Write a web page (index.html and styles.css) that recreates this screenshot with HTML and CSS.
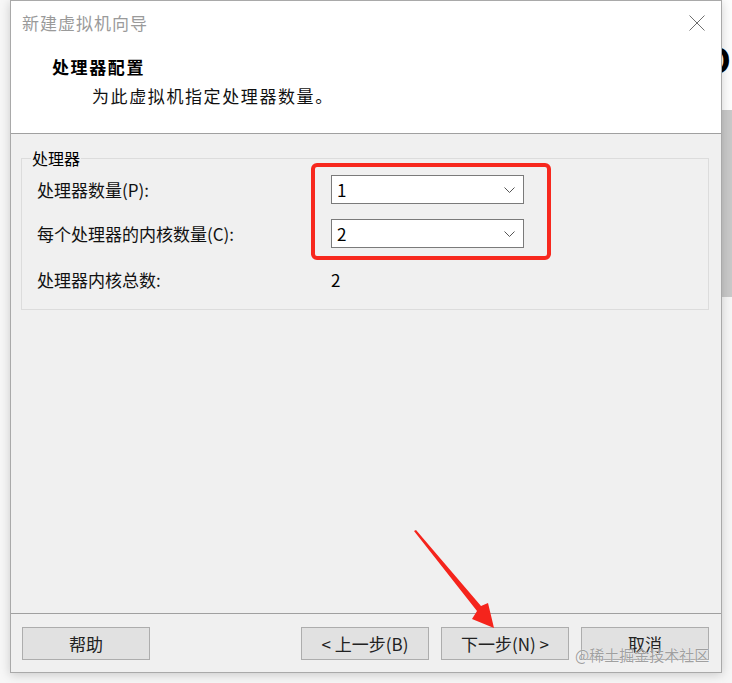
FILE: index.html
```html
<!DOCTYPE html>
<html lang="zh-CN">
<head>
<meta charset="utf-8">
<title>新建虚拟机向导</title>
<link rel="stylesheet" href="styles.css">
</head>
<body>
<div class="screen">
  <div class="dialog">
    <div class="header">
      <div class="titlebar">
        <span class="title">新建虚拟机向导</span>
        <svg class="close" width="16" height="16" viewBox="0 0 16 16"><path d="M0.5 0.5 L15.5 15.5 M15.5 0.5 L0.5 15.5" stroke="#6e6e6e" stroke-width="1" fill="none"/></svg>
      </div>
      <div class="heading">处理器配置</div>
      <div class="subheading">为此虚拟机指定处理器数量。</div>
    </div>
    <div class="main">
      <fieldset class="group">
        <legend>处理器</legend>
        <div class="row">
          <span class="label">处理器数量(P):</span>
          <div class="select"><span>1</span><svg width="11" height="6" viewBox="0 0 11 6"><path d="M0.5 0.5 L5.5 5.5 L10.5 0.5" stroke="#555" stroke-width="1" fill="none"/></svg></div>
        </div>
        <div class="row">
          <span class="label">每个处理器的内核数量(C):</span>
          <div class="select"><span>2</span><svg width="11" height="6" viewBox="0 0 11 6"><path d="M0.5 0.5 L5.5 5.5 L10.5 0.5" stroke="#555" stroke-width="1" fill="none"/></svg></div>
        </div>
        <div class="row row-total">
          <span class="label">处理器内核总数:</span>
          <span class="value">2</span>
        </div>
      </fieldset>
    </div>
    <div class="footer">
      <button class="btn">帮助</button>
      <div class="spacer"></div>
      <div class="nav">
        <button class="btn">&lt; 上一步(B)</button>
        <button class="btn">下一步(N) &gt;</button>
        <button class="btn">取消</button>
      </div>
    </div>
  </div>
  <div class="bgwin">
    <div class="bg-top"><span class="bg-letter">O</span></div>
    <div class="bg-bar"></div>
    <div class="bg-rest"></div>
  </div>
</div>
<div class="highlight"></div>
<svg class="arrow" width="732" height="683" viewBox="0 0 732 683">
  <polygon points="414,531 416,530 481,606 488,603 494,628 472,619 477,611" fill="#f5241c"/>
</svg>
<div class="watermark">@稀土掘金技术社区</div>
</body>
</html>
```
FILE: styles.css
```css
* { box-sizing: border-box; }
html, body { margin: 0; padding: 0; }
body {
  width: 732px;
  height: 683px;
  overflow: hidden;
  background: #f7f7f7;
  font-family: "Noto Sans CJK SC", "Noto Sans", sans-serif;
  color: #000;
  position: relative;
}
.screen {
  display: flex;
  height: 683px;
}
.dialog {
  margin-left: 10px;
  width: 712px;
  height: 673px;
  border: 1px solid #a9a9a9;
  background: #f0f0f0;
  display: flex;
  flex-direction: column;
  box-shadow: 0 2px 10px rgba(0,0,0,0.18);
  position: relative;
  z-index: 1;
}
.header {
  background: #fff;
  height: 133px;
  border-bottom: 1px solid #a0a0a0;
  display: flex;
  flex-direction: column;
}
.titlebar {
  height: 44px;
  display: flex;
  align-items: center;
  justify-content: space-between;
  padding: 0 16px 0 11px;
}
.title {
  font-size: 17px;
  color: #9a9a9a;
  letter-spacing: 1px;
  line-height: 24px;
}
.close { display: block; }
.heading {
  margin-top: 10px;
  margin-left: 41px;
  font-size: 17px;
  line-height: 24px;
  font-weight: 700;
  letter-spacing: 1.6px;
  color: #000;
}
.subheading {
  margin-top: 5px;
  margin-left: 81px;
  font-size: 17px;
  line-height: 24px;
  letter-spacing: 1.6px;
  color: #111;
}
.main {
  flex: 1;
  padding: 14px 12px 0 10px;
}
.group {
  margin: 0;
  border: 1px solid #dcdcdc;
  padding: 7px 0 17px 0;
  min-width: 0;
}
.group legend {
  margin-left: 9px;
  padding: 0 1px;
  font-size: 16px;
  line-height: 20px;
}
.row {
  display: flex;
  align-items: center;
  height: 29px;
  padding-left: 15px;
}
.row + .row { margin-top: 15px; }
.row-total { height: 24px; margin-top: 20px !important; }
.label {
  width: 294px;
  font-size: 17px;
  line-height: 24px;
  color: #111;
}
.select {
  width: 193px;
  height: 29px;
  border: 1px solid #7a7a7a;
  background: #fff;
  display: flex;
  align-items: center;
  justify-content: space-between;
  padding: 0 8px 0 5px;
  font-size: 17px;
}
.select svg { display: block; }
.value { font-size: 17px; line-height: 24px; }
.footer {
  height: 59px;
  border-top: 1px solid #a0a0a0;
  padding: 13px 12px 0 11px;
  display: flex;
  align-items: flex-start;
}
.spacer { flex: 1; }
.nav { display: flex; gap: 12px; }
.btn {
  width: 128px;
  height: 33px;
  padding: 0;
  background: #e1e1e1;
  border: 1px solid #adadad;
  font-family: "Noto Sans CJK SC", "Noto Sans", sans-serif;
  font-size: 17px;
  color: #222;
  line-height: 24px;
}
.bgwin {
  flex: 1;
  display: flex;
  flex-direction: column;
  overflow: hidden;
}
.bg-top {
  height: 110px;
  background: #fdfdfd;
  overflow: hidden;
}
.bg-letter {
  display: block;
  margin-top: 42px;
  margin-left: -21px;
  font-family: "Liberation Sans", sans-serif;
  font-weight: 700;
  font-size: 38px;
  line-height: 38px;
  color: #000;
}
.bg-bar {
  height: 187px;
  background: #c9c9c9;
}
.bg-rest {
  flex: 1;
  background: #f6f6f6;
}
.highlight {
  position: absolute;
  left: 311px;
  top: 163px;
  width: 240px;
  height: 97px;
  border: 4px solid #f7281e;
  border-radius: 6px;
  z-index: 2;
}
.arrow {
  position: absolute;
  left: 0;
  top: 0;
  z-index: 3;
  pointer-events: none;
}
.watermark {
  position: absolute;
  left: 575px;
  top: 644px;
  font-size: 15px;
  line-height: 22px;
  color: rgba(130,130,130,0.75);
  text-shadow: 0 0 1px #fff;
  z-index: 3;
}
```
